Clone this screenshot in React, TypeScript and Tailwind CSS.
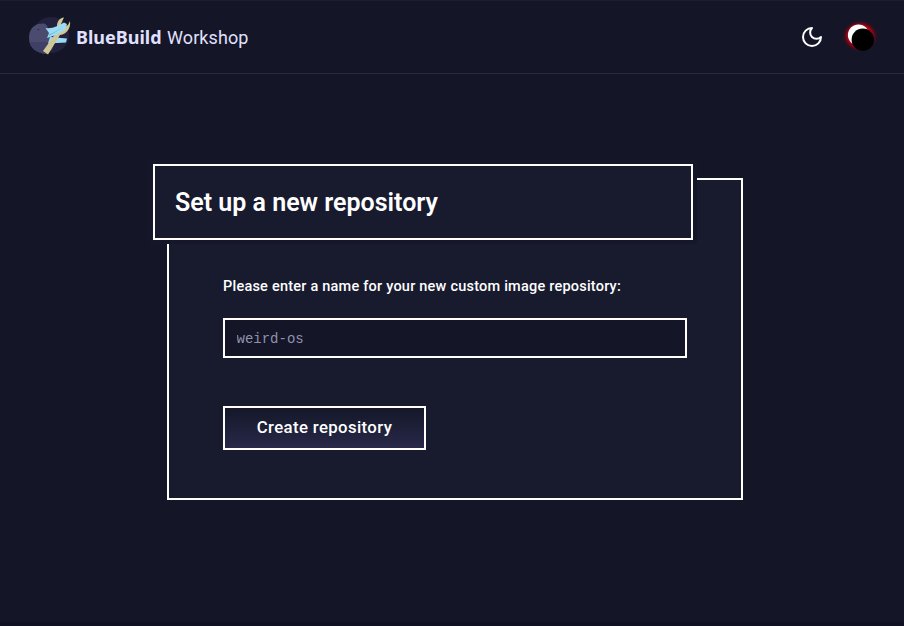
function BirdLogo() {
  return (
    <svg width="44" height="42" viewBox="0 0 44 42" aria-hidden="true">
      <circle cx="23" cy="19" r="18" fill="#22223f" />
      <path d="M1 22C1 12 7 7.5 15 7.5C18 7.5 20 10 20 14L27 26L19 38C7 37 1 31 1 22Z" fill="#4b4b70" />
      <path d="M1.5 26H27L24 34L18 38C8 37 3 32 1.5 26Z" fill="#404066" />
      <circle cx="10.3" cy="13.3" r="0.9" fill="#14142a" />
      <circle cx="10" cy="13" r="0.4" fill="#c5c5dd" />
      <path d="M22 21L39 22.5L38 26.500L20 27.500Z" fill="#9bdcf4" />
      <path d="M15 35L27.5 17.5L29 10C29 5 32 2 36 1.5L33 8L35.5 11.5L40 9L42 5C43 12 39 18 32 19L20 38.5Z" fill="#d1c796" />
      <path d="M17.5 12C25 13 31 9.5 36 6.500L39 8L37 14L28 19L19 22L21 17Z" fill="#9bdcf4" />
      <path d="M21 18C27 17 31 13 36 10L28 16L21 20Z" fill="#74bfe2" />
    </svg>
  );
}

function MoonIcon() {
  return (
    <svg width="24" height="24" viewBox="0 0 24 24" fill="none" stroke="white" strokeWidth="2" strokeLinecap="round" strokeLinejoin="round">
      <path d="M12 3a6 6 0 0 0 9 9 9 9 0 1 1-9-9Z" />
    </svg>
  );
}

function Eclipse() {
  return (
    <svg width="40" height="40" viewBox="0 0 40 40">
      <defs>
        <radialGradient id="corona">
          <stop offset="0.6" stopColor="#f00018" />
          <stop offset="0.75" stopColor="#b00010" stopOpacity="0.65" />
          <stop offset="1" stopColor="#500010" stopOpacity="0" />
        </radialGradient>
      </defs>
      <ellipse cx="20" cy="19" rx="18" ry="16" fill="url(#corona)" />
      <circle cx="18.5" cy="18" r="10.6" fill="white" />
      <circle cx="22.8" cy="22.7" r="11.2" fill="black" />
    </svg>
  );
}

export default function App() {
  return (
    <div className="flex h-[626px] flex-col bg-[#141526] font-[Roboto,sans-serif] text-white">
      <header className="flex h-[74px] shrink-0 items-center justify-between border-y border-t-[#1c1d30] border-b-[#292a43] pr-6 pl-7">
        <a className="flex items-center gap-1 text-[#e1e0ff]">
          <BirdLogo />
          <span className="flex gap-[6px] font-['Noto_Sans',sans-serif] text-[18px] leading-6">
            <b className="w-[85px] font-bold whitespace-nowrap">BlueBuild</b>
            <span className="pt-px font-[Roboto,sans-serif] tracking-[0.1px] whitespace-nowrap">Workshop</span>
          </span>
        </a>
        <div className="flex items-center gap-4">
          <button aria-label="Toggle theme"><MoonIcon /></button>
          <Eclipse />
        </div>
      </header>
      <main className="flex flex-1 flex-col pt-[104px] pl-[167px]">
        <section className="h-[322px] w-[576px] border-2 border-white bg-[#181a2e]">
          <div className="-mt-4 -ml-4 flex h-[76px] w-[540px] items-center border-2 border-white bg-[#181a2e] pt-0.5 pl-5 ring-4 ring-[#151629]">
            <h1 className="text-[25px] leading-8 font-semibold whitespace-nowrap">Set up a new repository</h1>
          </div>
          <form className="flex flex-col items-start pt-[37px] pl-[54px]" onSubmit={(e) => e.preventDefault()}>
            <label className="text-[14.5px] leading-5 font-medium tracking-[0.22px] whitespace-nowrap" htmlFor="repo">Please enter a name for your new custom image repository:</label>
            <input id="repo" placeholder="weird-os" className="mt-[21px] h-10 w-[464px] border-2 border-white bg-[#141526] px-[11.5px] pt-0.5 font-['Liberation_Mono',monospace] text-sm outline-none placeholder:text-[#9091b0]" />
            <button className="mt-12 h-11 w-[203px] border-2 border-white bg-linear-to-b from-[#141829] to-[#292849] text-[16.75px] font-medium tracking-[0.38px] whitespace-nowrap">Create repository</button>
          </form>
        </section>
      </main>
      <div className="h-1 bg-[#101123]" />
    </div>
  );
}
